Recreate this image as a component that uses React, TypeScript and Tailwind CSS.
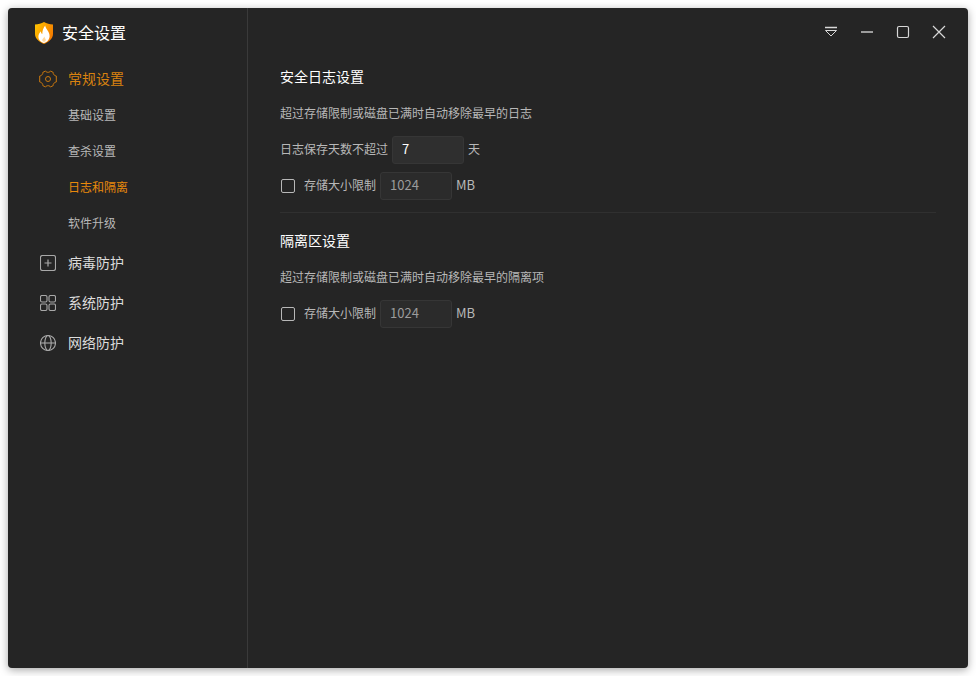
const font = { fontFamily: '"Noto Sans CJK SC", sans-serif' };

const subItems = ["基础设置", "查杀设置", "日志和隔离", "软件升级"];

function Logo() {
  return (
    <svg width="18" height="22" viewBox="0 0 18 22">
      <defs>
        <linearGradient id="sh" x1="0" y1="0" x2="1" y2="0.6">
          <stop offset="0" stopColor="#ffc800" />
          <stop offset="1" stopColor="#f47a00" />
        </linearGradient>
      </defs>
      <path d="M0 2.6 C3.4 2.4 6.4 1.6 9 0 C11.6 1.6 14.6 2.4 18 2.6 V12 C18 16.6 13.6 20 9 22 C4.4 20 0 16.6 0 12 Z" fill="url(#sh)" />
      <path d="M10.2 3.6 C10.4 7.4 15 9.6 14.6 14.6 C14.3 18.4 11.4 20.6 9 21 C6.4 20.6 3.6 18.4 3.4 15 C3.3 12.6 4.6 10.8 5.8 9.2 C6 10.8 6.5 11.6 7.3 12 C7.3 9 8.2 6 10.2 3.6 Z" fill="#fff" />
      <path d="M9.4 14.4 C9.6 16 11 16.6 10.8 18.2 C10.6 19.2 9.8 19.8 9 19.8 C8 19.8 7.2 19 7.2 18 C7.2 16.6 8.8 16 9.4 14.4 Z" fill="#ffd9a0" />
    </svg>
  );
}

function GearIcon() {
  return (
    <svg width="18" height="18" viewBox="0 0 18 18" fill="none" stroke="#c8780f" strokeWidth="1">
      <path d="M6.6 1 C7 2 8 2.3 9 2.3 C10 2.3 11 2 11.4 1 L14.2 2.4 C14 3.6 14.6 4.4 15.2 5 C15.8 5.5 16.4 6 17.3 6 V12 C16.4 12 15.8 12.5 15.2 13 C14.6 13.6 14 14.4 14.2 15.6 L11.4 17 C11 16 10 15.7 9 15.7 C8 15.7 7 16 6.6 17 L3.8 15.6 C4 14.4 3.4 13.6 2.8 13 C2.2 12.5 1.6 12 .7 12 V6 C1.6 6 2.2 5.5 2.8 5 C3.4 4.4 4 3.6 3.8 2.4 Z" />
      <circle cx="9" cy="9" r="2.5" />
    </svg>
  );
}

function PlusBoxIcon() {
  return (
    <svg width="16" height="16" viewBox="0 0 16 16" fill="none" stroke="#a8a8a8" strokeWidth="1.1">
      <rect x="0.5" y="0.5" width="15" height="15" rx="2" />
      <path d="M4.5 8 H11.5 M8 4.5 V11.5" strokeWidth="1.2" />
    </svg>
  );
}

function GridIcon() {
  return (
    <svg width="16" height="16" viewBox="0 0 16 16" fill="none" stroke="#a8a8a8" strokeWidth="1.1">
      <rect x="0.5" y="0.5" width="6.5" height="6.5" rx="1.5" />
      <rect x="9" y="0.5" width="6.5" height="6.5" rx="1.5" />
      <rect x="0.5" y="9" width="6.5" height="6.5" rx="1.5" />
      <rect x="9" y="9" width="6.5" height="6.5" rx="1.5" />
    </svg>
  );
}

function GlobeIcon() {
  return (
    <svg width="16" height="16" viewBox="0 0 16 16" fill="none" stroke="#a8a8a8" strokeWidth="1.1">
      <circle cx="8" cy="8" r="7.5" />
      <ellipse cx="8" cy="8" rx="3.2" ry="7.5" />
      <path d="M.5 8 H15.5" />
    </svg>
  );
}

function NavRow({ icon, label }: { icon: React.ReactNode; label: string }) {
  return (
    <div className="flex h-10 items-center">
      <div className="flex w-[60px] shrink-0 items-center justify-center pl-5">{icon}</div>
      <span className="pb-[2px] text-sm text-[#dcdcdc]">{label}</span>
    </div>
  );
}

function SizeLimit() {
  return (
    <div className="flex h-7 items-center">
      <span className="ml-px h-[14px] w-[14px] shrink-0 rounded-[2px] border border-[#b8b8b8]" />
      <span className="ml-[9px] pb-[2px] text-xs text-[#b8b8b8]">存储大小限制</span>
      <div className="ml-1 flex h-7 w-[72px] items-center rounded-[3px] border border-[#363636] bg-[#2b2b2b] pb-[2px] pl-[9px] text-[13px] text-[#9c9c9c]">
        1024
      </div>
      <span className="ml-[4px] pb-[2px] text-[13px] text-[#b8b8b8]">MB</span>
    </div>
  );
}

export default function App() {
  return (
    <div className="h-[676px] w-[976px] bg-white p-2" style={font}>
      <div className="flex h-[660px] w-[960px] overflow-hidden rounded-[4px] bg-[#252525] shadow-[0_2px_8px_rgba(0,0,0,0.35)]">
        <aside className="w-[240px] shrink-0 border-r border-[#3a3a3a]">
          <div className="flex h-[50px] items-center pl-[27px]">
            <Logo />
            <span className="ml-[9px] pb-[2px] text-base text-white">安全设置</span>
          </div>
          <div className="mt-[3px] flex h-9 items-center">
            <div className="flex w-[60px] shrink-0 justify-center pl-5">
              <GearIcon />
            </div>
            <span className="pb-[2px] text-sm text-[#d9820f]">常规设置</span>
          </div>
          {subItems.map((item) => (
            <div
              key={item}
              className={`flex h-9 items-center pl-[60px] text-xs ${
                item === "日志和隔离" ? "text-[#e8890c]" : "text-[#b8b8b8]"
              }`}
            >
              {item}
            </div>
          ))}
          <div className="mt-[2px]">
            <NavRow icon={<PlusBoxIcon />} label="病毒防护" />
            <NavRow icon={<GridIcon />} label="系统防护" />
            <NavRow icon={<GlobeIcon />} label="网络防护" />
          </div>
        </aside>

        <main className="flex-1">
          <div className="flex h-[48px] items-center justify-end gap-[20px] pr-[21px]">
            <svg width="16" height="16" viewBox="0 0 16 16" fill="none" stroke="#d8d8d8">
              <path d="M2 3.5 H14" strokeWidth="1.4" />
              <path d="M2.5 6.5 H13.5 L8 12 Z" strokeWidth="1" />
            </svg>
            <svg width="16" height="16" viewBox="0 0 16 16" fill="none" stroke="#c4c4c4">
              <path d="M2 8 H14" strokeWidth="1.4" />
            </svg>
            <svg width="16" height="16" viewBox="0 0 16 16" fill="none" stroke="#d8d8d8">
              <rect x="2.5" y="2.5" width="11" height="11" rx="1.5" strokeWidth="1.2" />
            </svg>
            <svg width="16" height="16" viewBox="0 0 16 16" fill="none" stroke="#d8d8d8">
              <path d="M2 2 L14 14 M14 2 L2 14" strokeWidth="1.2" />
            </svg>
          </div>

          <div className="px-8">
            <h2 className="mt-[10px] flex h-5 items-center text-sm text-white">安全日志设置</h2>
            <p className="mt-[17px] flex h-5 items-center text-xs text-[#b8b8b8]">
              超过存储限制或磁盘已满时自动移除最早的日志
            </p>
            <div className="mt-[13px] flex h-7 items-center">
              <span className="pb-[2px] text-xs text-[#b8b8b8]">日志保存天数不超过</span>
              <div className="ml-1 flex h-7 w-[72px] items-center rounded-[3px] border border-[#363636] bg-[#2f2f2f] pb-[2px] pl-[9px] text-[13px] text-white">
                7
              </div>
              <span className="ml-1 pb-[2px] text-xs text-[#b8b8b8]">天</span>
            </div>
            <div className="mt-2">
              <SizeLimit />
            </div>
            <div className="mt-3 h-px w-[656px] bg-[#303030]" />

            <h2 className="mt-[17px] flex h-5 items-center text-sm text-white">隔离区设置</h2>
            <p className="mt-[17px] flex h-5 items-center text-xs text-[#b8b8b8]">
              超过存储限制或磁盘已满时自动移除最早的隔离项
            </p>
            <div className="mt-[13px]">
              <SizeLimit />
            </div>
          </div>
        </main>
      </div>
    </div>
  );
}
